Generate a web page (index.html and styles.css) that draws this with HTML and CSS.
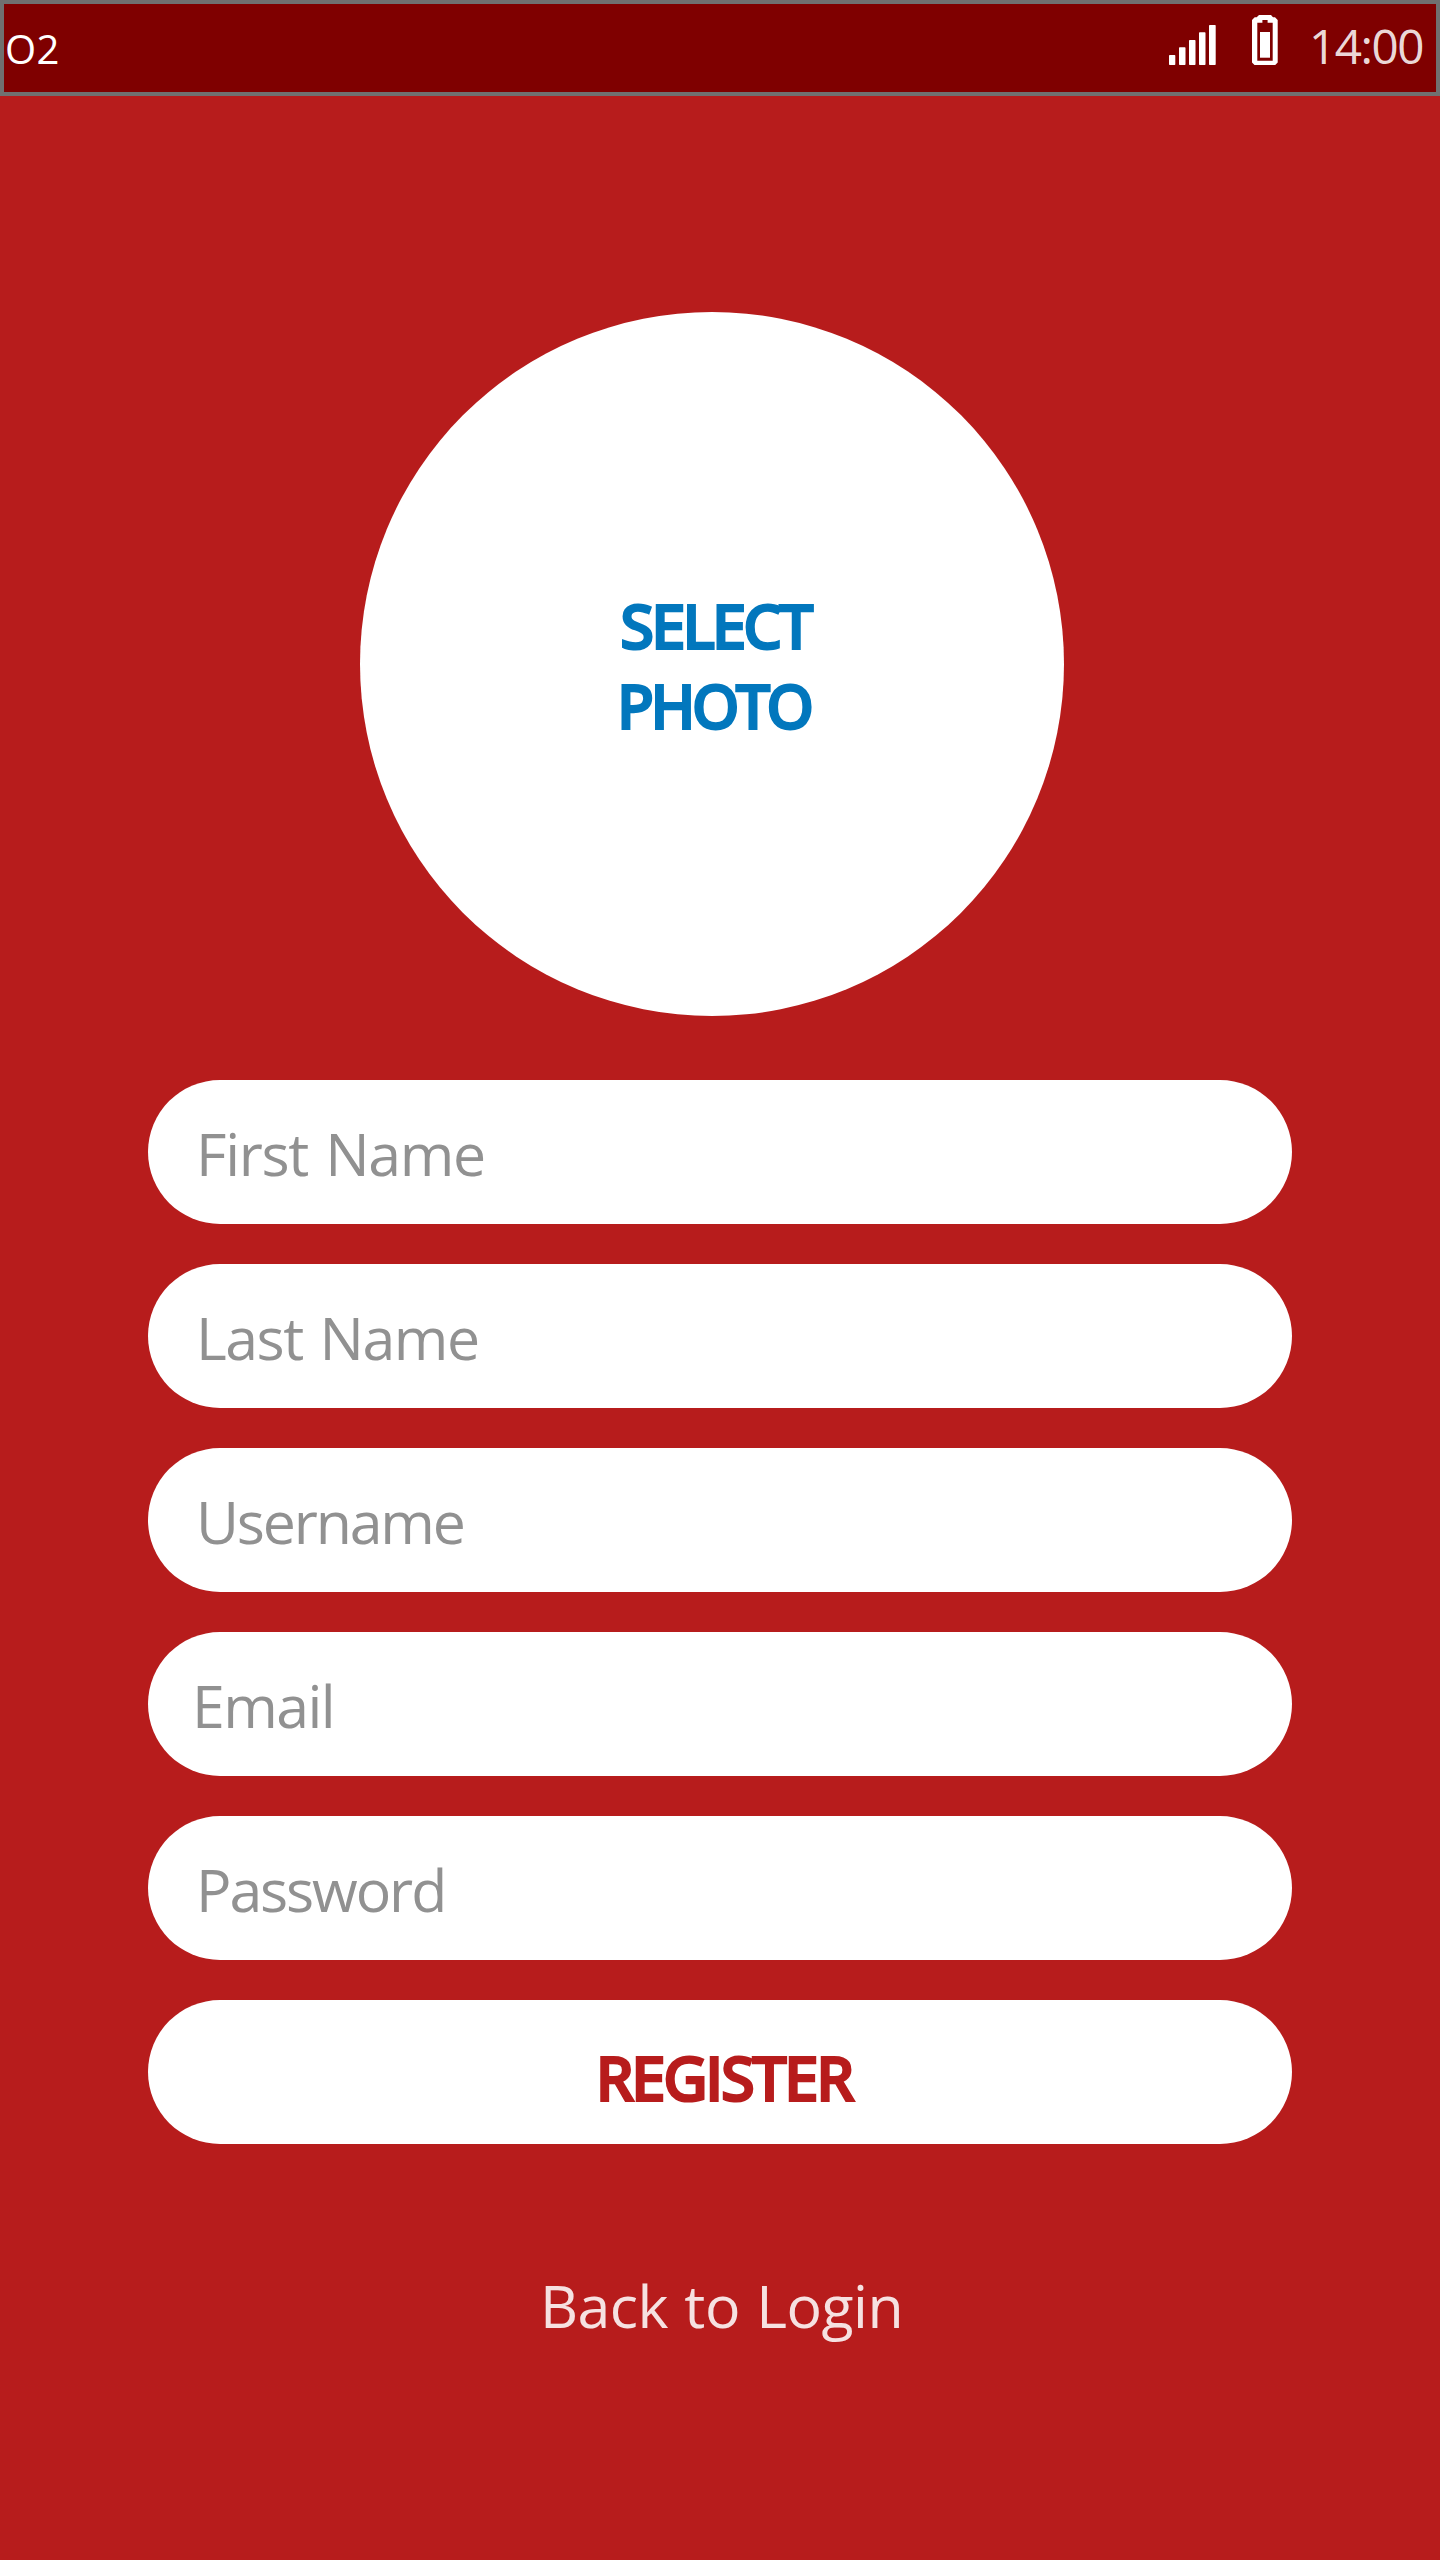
FILE: index.html
```html
<!DOCTYPE html>
<html lang="en">
<head>
<meta charset="utf-8">
<title>Register</title>
<link rel="stylesheet" href="styles.css">
</head>
<body>
<header class="status-bar">
  <span class="carrier">O2</span>
  <div class="indicators">
    <svg class="signal" width="48" height="40" viewBox="0 0 48 40" fill="#fff">
      <rect x="0" y="30" width="6.3" height="10" rx=".7"/>
      <rect x="10" y="22.3" width="6.5" height="17.7" rx=".7"/>
      <rect x="20" y="15" width="6.5" height="25" rx=".7"/>
      <rect x="30" y="7.3" width="6.5" height="32.7" rx=".7"/>
      <rect x="40" y="0" width="6.7" height="40" rx=".7"/>
    </svg>
    <svg class="battery" width="26" height="50" viewBox="0 0 26 50" fill="#fff">
      <path fill-rule="evenodd" d="M7 0H19L21 2.3H23L25.7 5V47.5L23.2 50H2.5L0 47.5V5L2.7 2.3H4.7ZM5.3 7.7V45.7H20.7V7.7H15.6V5H10.4V7.7Z"/>
      <rect x="8" y="17" width="10" height="25.7"/>
    </svg>
    <span class="clock">14:00</span>
  </div>
</header>
<main class="register">
  <button class="photo" type="button">
    <span class="photo-select">SELECT</span>
    <span class="photo-word">PHOTO</span>
  </button>
  <form class="form">
    <div class="field first-name">First Name</div>
    <div class="field last-name">Last Name</div>
    <div class="field username">Username</div>
    <div class="field email">Email</div>
    <div class="field password">Password</div>
    <button class="submit" type="button">REGISTER</button>
  </form>
  <a class="back">Back to Login</a>
</main>
</body>
</html>
```
FILE: styles.css
```css
* { box-sizing: border-box; }

body {
  margin: 0;
  height: 2560px;
  background: #b71c1c;
  font-family: "Open Sans", "Noto Sans", sans-serif;
  font-size: 59px;
  white-space: nowrap;
}

button {
  border: 0;
  padding: 0;
  background: #fff;
  font: inherit;
}

.status-bar {
  display: flex;
  justify-content: space-between;
  height: 96px;
  border: 4px solid #707070;
  background: #7f0000;
  color: #fff;
}

.carrier {
  padding-left: 1px;
  font-size: 40px;
  font-weight: 400;
  line-height: 89px;
  letter-spacing: .5px;
}

.indicators {
  display: flex;
  align-items: flex-start;
  padding-right: 11.5px;
}

.signal { margin: 21px 35px 0 0; }
.battery { margin: 11px 31px 0 0; }

.clock {
  width: 115.5px;
  font-size: 47.6px;
  line-height: 83px;
  letter-spacing: -1.45px;
  color: rgba(255, 255, 255, .87);
}

.register {
  display: flex;
  flex-direction: column;
  align-items: center;
  padding-top: 216px;
}

.photo {
  display: flex;
  flex-direction: column;
  align-items: center;
  width: 704px;
  height: 704px;
  margin-right: 16px;
  padding-top: 273px;
  border-radius: 50%;
  color: #0277bd;
  line-height: 80px;
  -webkit-text-stroke: 4px #0277bd;
}

.photo-select { padding-left: 8px; letter-spacing: -1.4px; }
.photo-word { padding-left: 5px; letter-spacing: -2px; }

.form {
  display: flex;
  flex-direction: column;
  gap: 40px;
  width: 1144px;
  margin-top: 64px;
}

.field,
.submit {
  height: 144px;
  border-radius: 72px;
}

.field {
  padding-left: 48px;
  background: #fff;
  color: #919191;
  line-height: 146px;
}

.first-name { letter-spacing: -1.3px; word-spacing: 3px; }
.last-name { letter-spacing: -1.5px; word-spacing: 3px; }
.username { letter-spacing: -2.17px; }
.email { padding-left: 44px; letter-spacing: -1.6px; }
.password { letter-spacing: -2.1px; }

.submit {
  padding: 10px 0 0 9px;
  color: #b71c1c;
  letter-spacing: -.83px;
  line-height: 134px;
  -webkit-text-stroke: 4px #b71c1c;
}

.back {
  margin-top: 100px;
  padding-left: 3px;
  color: rgba(255, 255, 255, .87);
  letter-spacing: -.5px;
  word-spacing: 1.5px;
  line-height: 122px;
}
```
